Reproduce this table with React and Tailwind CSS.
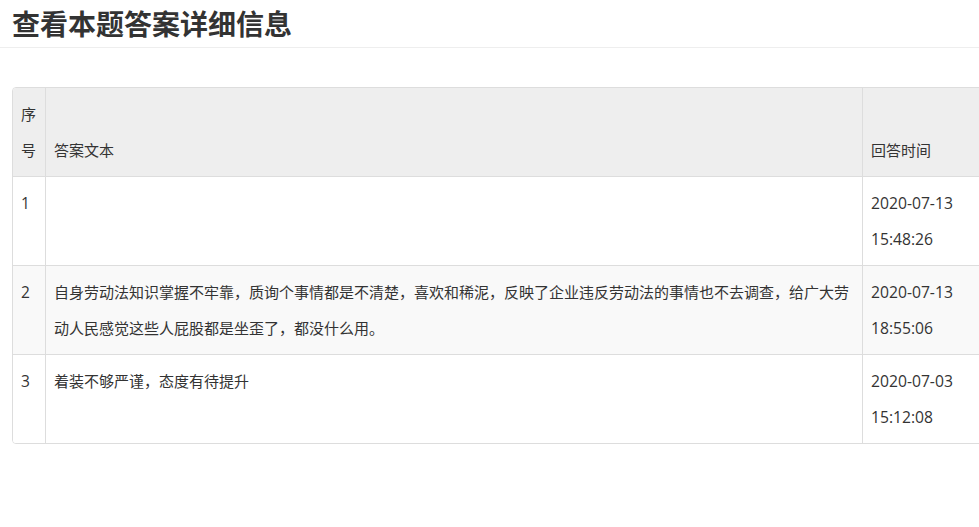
export default function App() {
  const rows = [
    { n: "1", text: "", d: "2020-07-13", t: "15:48:26", bg: "bg-white" },
    {
      n: "2",
      text: "自身劳动法知识掌握不牢靠，质询个事情都是不清楚，喜欢和稀泥，反映了企业违反劳动法的事情也不去调查，给广大劳动人民感觉这些人屁股都是坐歪了，都没什么用。",
      d: "2020-07-13",
      t: "18:55:06",
      bg: "bg-[#f9f9f9]",
    },
    { n: "3", text: "着装不够严谨，态度有待提升", d: "2020-07-03", t: "15:12:08", bg: "bg-white" },
  ];
  return (
    <div
      className="w-[979px] h-[527px] overflow-hidden bg-white text-[#333]"
      style={{ fontFamily: '"Open Sans", "Noto Sans CJK SC", sans-serif' }}
    >
      <div className="h-[48px] border-b border-[#eee] flex items-center px-3">
        <h1 className="text-[28px] font-bold leading-none text-[#333]">查看本题答案详细信息</h1>
      </div>
      <div className="mt-[39px] ml-3 w-[1000px] border border-[#ddd] rounded-[4px] overflow-hidden text-[15px] leading-[36px]">
        <div className="flex bg-[#eee]">
          <div className="w-[33px] shrink-0 px-2 py-2 border-r border-[#ddd] flex items-end">序号</div>
          <div className="w-[817px] shrink-0 px-2 py-2 border-r border-[#ddd] flex items-end">答案文本</div>
          <div className="w-[140px] shrink-0 px-2 py-2 flex items-end h-[88px]">回答时间</div>
        </div>
        {rows.map((r) => (
          <div key={r.n} className={`flex border-t border-[#ddd] ${r.bg}`}>
            <div className="w-[33px] shrink-0 px-2 py-2 border-r border-[#ddd] text-[15.5px]">{r.n}</div>
            <div className="w-[817px] shrink-0 px-2 py-2 border-r border-[#ddd]">{r.text}</div>
            <div className="w-[140px] shrink-0 px-2 py-2 text-[15.7px]">
              <div>{r.d}</div>
              <div>{r.t}</div>
            </div>
          </div>
        ))}
      </div>
    </div>
  );
}
